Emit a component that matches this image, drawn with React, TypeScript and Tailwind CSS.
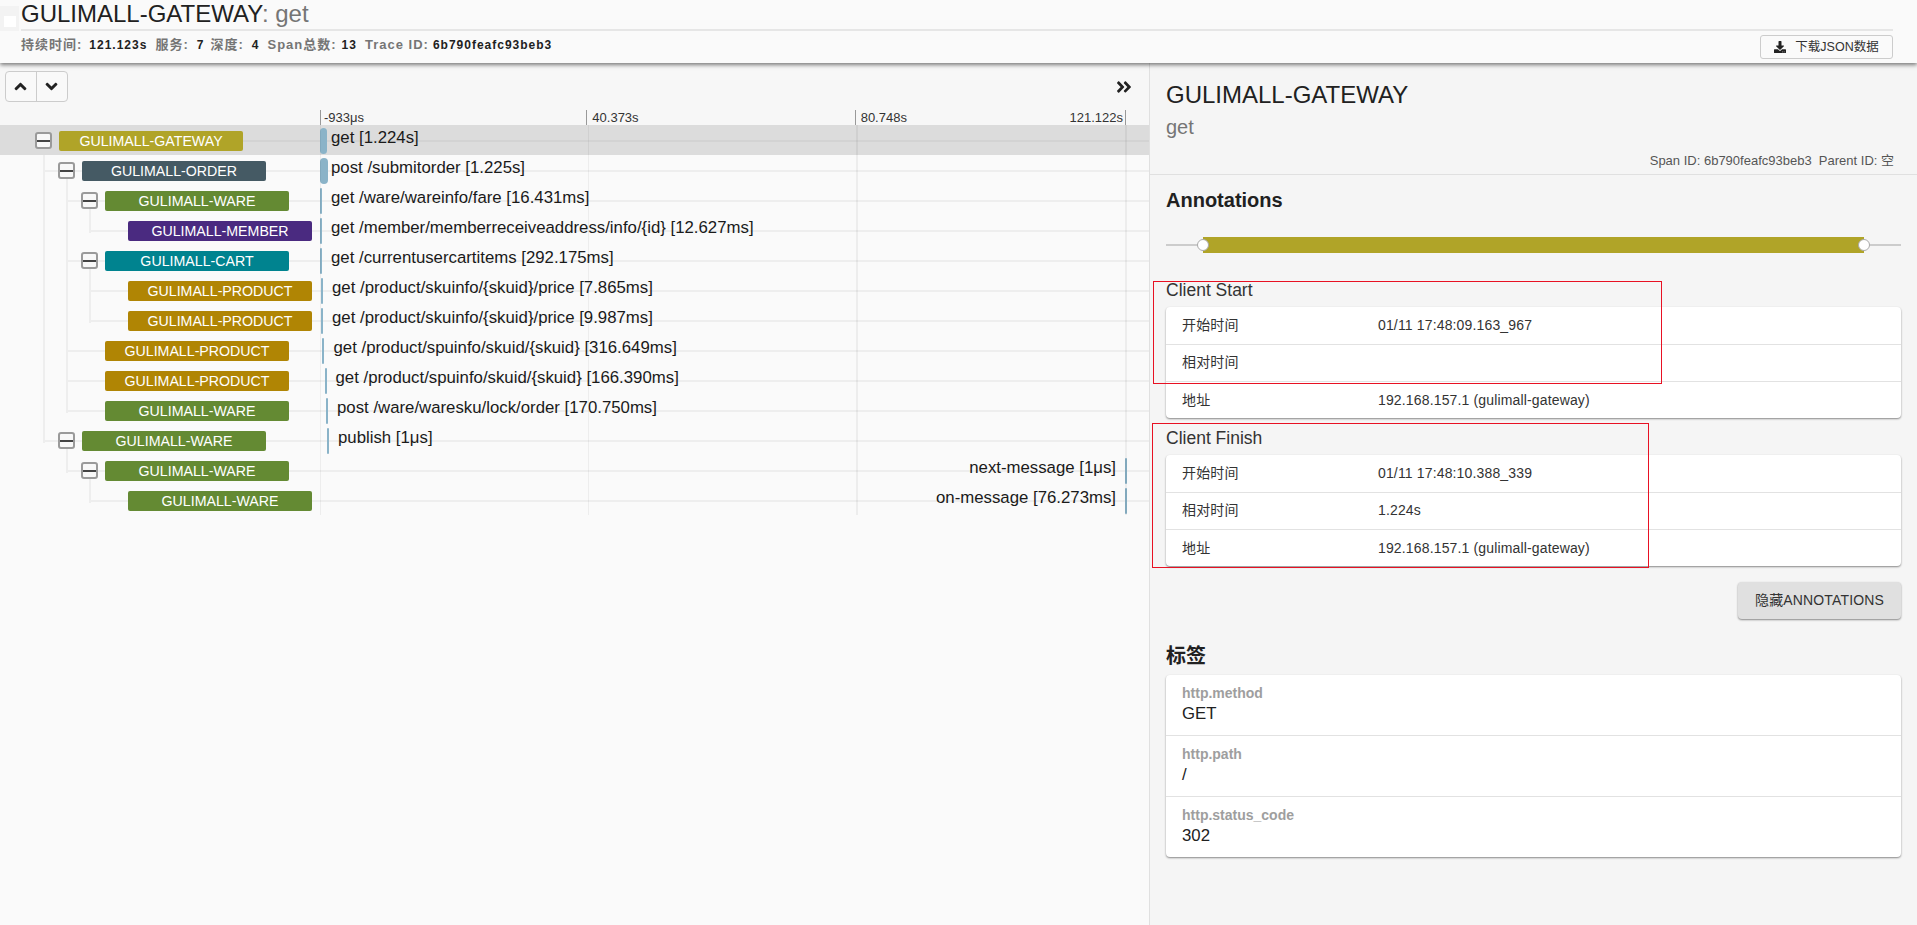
import React from "react";
import { FaAngleUp, FaAngleDown, FaAngleDoubleRight, FaDownload } from "react-icons/fa";

const font = { fontFamily: '"Liberation Sans", "Noto Sans CJK SC", sans-serif' };

type Row = {
  name: string;
  depth: number;
  color: string;
  box?: boolean;
  parent?: number;
  label: string;
  barLeft: number;
  barW: number;
  textLeft?: number;
  textRight?: number;
};

const GATEWAY = "bg-[#b0a428]";
const ORDER = "bg-[#455a64]";
const WARE = "bg-[#648a33]";
const MEMBER = "bg-[#4a2a80]";
const CART = "bg-[#00838f]";
const PRODUCT = "bg-[#b08504]";

const rows: Row[] = [
  { name: "GULIMALL-GATEWAY", depth: 0, color: GATEWAY, box: true, label: "get [1.224s]", barLeft: 0, barW: 7, textLeft: 11 },
  { name: "GULIMALL-ORDER", depth: 1, color: ORDER, box: true, parent: 0, label: "post /submitorder [1.225s]", barLeft: 0, barW: 8, textLeft: 11 },
  { name: "GULIMALL-WARE", depth: 2, color: WARE, box: true, parent: 1, label: "get /ware/wareinfo/fare [16.431ms]", barLeft: 0, barW: 2, textLeft: 11 },
  { name: "GULIMALL-MEMBER", depth: 3, color: MEMBER, parent: 2, label: "get /member/memberreceiveaddress/info/{id} [12.627ms]", barLeft: 0, barW: 2, textLeft: 11 },
  { name: "GULIMALL-CART", depth: 2, color: CART, box: true, parent: 1, label: "get /currentusercartitems [292.175ms]", barLeft: 0, barW: 2, textLeft: 11 },
  { name: "GULIMALL-PRODUCT", depth: 3, color: PRODUCT, parent: 4, label: "get /product/skuinfo/{skuid}/price [7.865ms]", barLeft: 1, barW: 2, textLeft: 12 },
  { name: "GULIMALL-PRODUCT", depth: 3, color: PRODUCT, parent: 4, label: "get /product/skuinfo/{skuid}/price [9.987ms]", barLeft: 1, barW: 2, textLeft: 12 },
  { name: "GULIMALL-PRODUCT", depth: 2, color: PRODUCT, parent: 1, label: "get /product/spuinfo/skuid/{skuid} [316.649ms]", barLeft: 2, barW: 2, textLeft: 13.5 },
  { name: "GULIMALL-PRODUCT", depth: 2, color: PRODUCT, parent: 1, label: "get /product/spuinfo/skuid/{skuid} [166.390ms]", barLeft: 5, barW: 2, textLeft: 15.5 },
  { name: "GULIMALL-WARE", depth: 2, color: WARE, parent: 1, label: "post /ware/waresku/lock/order [170.750ms]", barLeft: 6, barW: 2, textLeft: 17 },
  { name: "GULIMALL-WARE", depth: 1, color: WARE, box: true, parent: 0, label: "publish [1μs]", barLeft: 7, barW: 2, textLeft: 18 },
  { name: "GULIMALL-WARE", depth: 2, color: WARE, box: true, parent: 10, label: "next-message [1μs]", barLeft: 805, barW: 2, textRight: 33 },
  { name: "GULIMALL-WARE", depth: 3, color: WARE, parent: 11, label: "on-message [76.273ms]", barLeft: 805, barW: 2, textRight: 33 },
];

function lastChildIndex(i: number) {
  let last = -1;
  rows.forEach((r, j) => {
    if (r.parent === i) last = j;
  });
  return last;
}

function Stat({ label, value, className }: { label: string; value: string; className?: string }) {
  return (
    <span className={"flex items-baseline " + (className ?? "")}>
      <span className="text-[13px] text-[#757575]">{label}</span>
      <span className="text-[12px] text-[#212121]">{value}</span>
    </span>
  );
}

function Connectors() {
  return (
    <>
      {rows.map((r, i) => {
        const last = lastChildIndex(i);
        if (last < 0) return null;
        const x = 43 + 23 * r.depth;
        return (
          <div
            key={i}
            className="absolute w-[2px] bg-[#eeeeee]"
            style={{ left: x, top: 16 + 30 * i, height: 30 * (last - i) + 2 }}
          />
        );
      })}
    </>
  );
}

function TraceRow({ r }: { r: Row }) {
  const left = 59 + 23 * r.depth;
  const lineStart = r.parent === undefined ? left : left - 39;
  const selected = r.parent === undefined;
  return (
    <div className={"relative h-[30px] " + (selected ? "bg-[#dcdcdc]" : "")}>
      <div
        className={"absolute top-[15px] right-0 h-[2px] " + (selected ? "bg-[#d3d3d3]" : "bg-[#eeeeee]")}
        style={{ left: lineStart }}
      />
      {r.box && (
        <div
          className="absolute top-[7px] z-10 flex h-[17px] w-[17px] items-center rounded-[3px] border-2 border-[#9a9a9a] bg-[#f8f8f8]"
          style={{ left: left - 24 }}
        >
          <div className="h-[2px] w-full bg-[#444444]" />
        </div>
      )}
      <div
        className={"absolute top-[6px] z-10 flex h-[20px] w-[184px] items-center justify-center rounded-[2px] pt-[1px] text-[14.2px] text-white " + r.color}
        style={{ left }}
      >
        {r.name}
      </div>
      <div className="absolute top-0 bottom-0 right-0 left-[320px]">
        <div
          className="absolute top-[3px] h-[26px] rounded-full bg-[#8ab3c8]"
          style={{ left: r.barLeft, width: r.barW }}
        />
        <div
          className="absolute top-[1px] z-10 whitespace-nowrap text-[16.8px] leading-[24px] text-[#1a1a1a]"
          style={r.textRight !== undefined ? { right: r.textRight } : { left: r.textLeft }}
        >
          {r.label}
        </div>
      </div>
    </div>
  );
}

function KVCard({ items }: { items: [string, string][] }) {
  return (
    <div className="rounded-[4px] bg-white shadow-[0_1px_2px_rgba(0,0,0,0.45)]">
      {items.map(([k, v], i) => (
        <div
          key={k}
          className={
            "flex h-[37px] items-center pl-[16px] text-[14px] tracking-[0.15px] text-[#333333] " +
            (i > 0 ? "border-t border-[#e2e2e2] " : "") +
            (i === 1 ? "pb-[2px]" : "")
          }
        >
          <span className="w-[196px] shrink-0">{k}</span>
          <span>{v}</span>
        </div>
      ))}
    </div>
  );
}

function Tag({ k, v, first }: { k: string; v: string; first?: boolean }) {
  return (
    <div className={"pl-[16px] pt-[8px] " + (first ? "h-[60px]" : "h-[61px] border-t border-[#e2e2e2]")}>
      <div className="text-[14px] font-bold leading-[20px] text-[#9e9e9e]">{k}</div>
      <div className="text-[16.8px] leading-[22px] text-[#212121]">{v}</div>
    </div>
  );
}

export default function App() {
  return (
    <div className="relative flex h-[925px] w-[1917px] flex-col overflow-hidden bg-[#f5f5f5]" style={font}>
      <header className="relative z-20 h-[63px] shrink-0 bg-[#fafafa] pl-[21px] pr-[24px] shadow-[0_2px_4px_rgba(0,0,0,0.5)]">
        <div className="absolute left-0 top-[6px] flex h-[25px] w-[19px] items-center justify-center bg-[#f3f3f3]">
          <div className="mt-[6px] h-[11px] w-[12px] bg-white" />
        </div>
        <div className="h-[31px] border-b-2 border-[#e6e6e6] text-[24px] leading-[27px] text-[#212121]">
          GULIMALL-GATEWAY<span className="text-[#757575]">: get</span>
        </div>
        <div className="flex h-[32px] items-center justify-between">
          <div className="mt-[-4px] flex font-bold tracking-[1px]">
            <Stat label="持续时间:" value="121.123s" className="gap-[7px]" />
            <Stat label="服务:" value="7" className="ml-[8px] gap-[8px]" />
            <Stat label="深度:" value="4" className="ml-[6px] gap-[8px]" />
            <Stat label="Span总数:" value="13" className="ml-[8px] gap-[5px]" />
            <Stat label="Trace ID:" value="6b790feafc93beb3" className="ml-[8px] gap-[4px]" />
          </div>
          <button className="flex h-[24px] w-[133px] items-center justify-center gap-[9px] rounded-[3px] border border-[#cccccc] bg-[#fafafa] text-[12.5px] text-[#333333]">
            <FaDownload className="h-[12px] w-[12px] text-[#222222]" />
            下载JSON数据
          </button>
        </div>
      </header>

      <main className="flex min-h-0 flex-1">
        <section className="relative w-[1149px] shrink-0 bg-[#fafafa]">
          <div className="h-[47px] bg-[#f7f7f7]">
            <div className="flex items-start justify-between pl-[5px] pr-[16px] pt-[8px]">
              <div className="flex h-[31px] w-[63px] rounded-[4px] border border-[#cccccc] bg-[#f9f9f9]">
                <div className="flex w-1/2 items-center justify-center border-r border-[#cccccc]">
                  <FaAngleUp className="h-[19px] w-[19px] text-[#222222]" />
                </div>
                <div className="flex w-1/2 items-center justify-center">
                  <FaAngleDown className="h-[19px] w-[19px] text-[#222222]" />
                </div>
              </div>
              <FaAngleDoubleRight className="mt-[7px] h-[18px] w-[18px] text-[#222222]" />
            </div>
          </div>
          <div className="flex h-[15px] bg-[#f7f7f7] pl-[320px] pr-[23px] text-[13px] leading-[16px] text-[#333333]">
            <div className="flex-1 border-l border-[#999999] pl-[3px]">-933μs</div>
            <div className="flex-1 border-l border-[#999999] pl-[5px]">40.373s</div>
            <div className="flex flex-1 justify-between border-x border-[#999999] pl-[5px] pr-[2px]">
              <span>80.748s</span>
              <span>121.122s</span>
            </div>
          </div>
          <div className="relative">
            <Connectors />
            {rows.map((r, i) => (
              <TraceRow key={i} r={r} />
            ))}
            <div className="pointer-events-none absolute inset-y-0 left-[320px] right-[22px] flex">
              <div className="flex-1 border-l border-black/5" />
              <div className="flex-1 border-l border-black/5" />
              <div className="flex-1 border-x-2 border-x-black/5" />
            </div>
          </div>
        </section>

        <aside className="min-w-0 flex-1 border-l border-[#e0e0e0] bg-[#f5f5f5]">
          <div className="h-[112px] border-b border-[#e0e0e0] pl-[16px] pr-[23px] pt-[17px]">
            <div className="text-[24px] leading-[30px] text-[#212121]">GULIMALL-GATEWAY</div>
            <div className="mt-[3px] text-[20px] leading-[28px] text-[#757575]">get</div>
            <div className="mt-[12px] text-right text-[13px] leading-[16px] text-[#555555]">
              Span ID: 6b790feafc93beb3 &nbsp;Parent ID: 空
            </div>
          </div>
          <div className="px-[16px]">
            <h2 className="mt-[13px] text-[20px] font-bold leading-[24px] text-[#212121]">Annotations</h2>
            <div className="relative mt-[25px] h-[16px]">
              <div className="absolute inset-x-0 top-[7px] h-[2px] bg-[#cccccc]" />
              <div className="absolute inset-y-0 left-[37px] right-[37px] bg-[#b0a428]" />
              <div className="absolute left-[31px] top-[2px] h-[12px] w-[12px] rounded-full border-[1.5px] border-[#aaaaaa] bg-white" />
              <div className="absolute right-[31px] top-[2px] h-[12px] w-[12px] rounded-full border-[1.5px] border-[#aaaaaa] bg-white" />
            </div>
            <h3 className="mt-[26px] text-[17.5px] leading-[22px] text-[#333333]">Client Start</h3>
            <div className="mt-[6px]">
              <KVCard
                items={[
                  ["开始时间", "01/11 17:48:09.163_967"],
                  ["相对时间", ""],
                  ["地址", "192.168.157.1 (gulimall-gateway)"],
                ]}
              />
            </div>
            <h3 className="mt-[9px] text-[17.5px] leading-[22px] text-[#333333]">Client Finish</h3>
            <div className="mt-[6px]">
              <KVCard
                items={[
                  ["开始时间", "01/11 17:48:10.388_339"],
                  ["相对时间", "1.224s"],
                  ["地址", "192.168.157.1 (gulimall-gateway)"],
                ]}
              />
            </div>
            <div className="mt-[16px] flex justify-end">
              <button className="flex h-[37px] w-[163px] items-center justify-center rounded-[4px] bg-[#e0e0e0] text-[14px] tracking-[0.15px] text-[#333333] shadow-[0_1px_2px_rgba(0,0,0,0.45)]">
                隐藏ANNOTATIONS
              </button>
            </div>
            <h2 className="mt-[25px] text-[20px] font-bold leading-[24px] text-[#212121]">标签</h2>
            <div className="mt-[7px] rounded-[4px] bg-white shadow-[0_1px_2px_rgba(0,0,0,0.45)]">
              <Tag k="http.method" v="GET" first />
              <Tag k="http.path" v="/" />
              <Tag k="http.status_code" v="302" />
            </div>
          </div>
        </aside>
      </main>

      <div className="pointer-events-none absolute left-[1153px] top-[281px] z-30 h-[103px] w-[509px] border border-[#e81123]" />
      <div className="pointer-events-none absolute left-[1152px] top-[423px] z-30 h-[145px] w-[497px] border border-[#e81123]" />
    </div>
  );
}
